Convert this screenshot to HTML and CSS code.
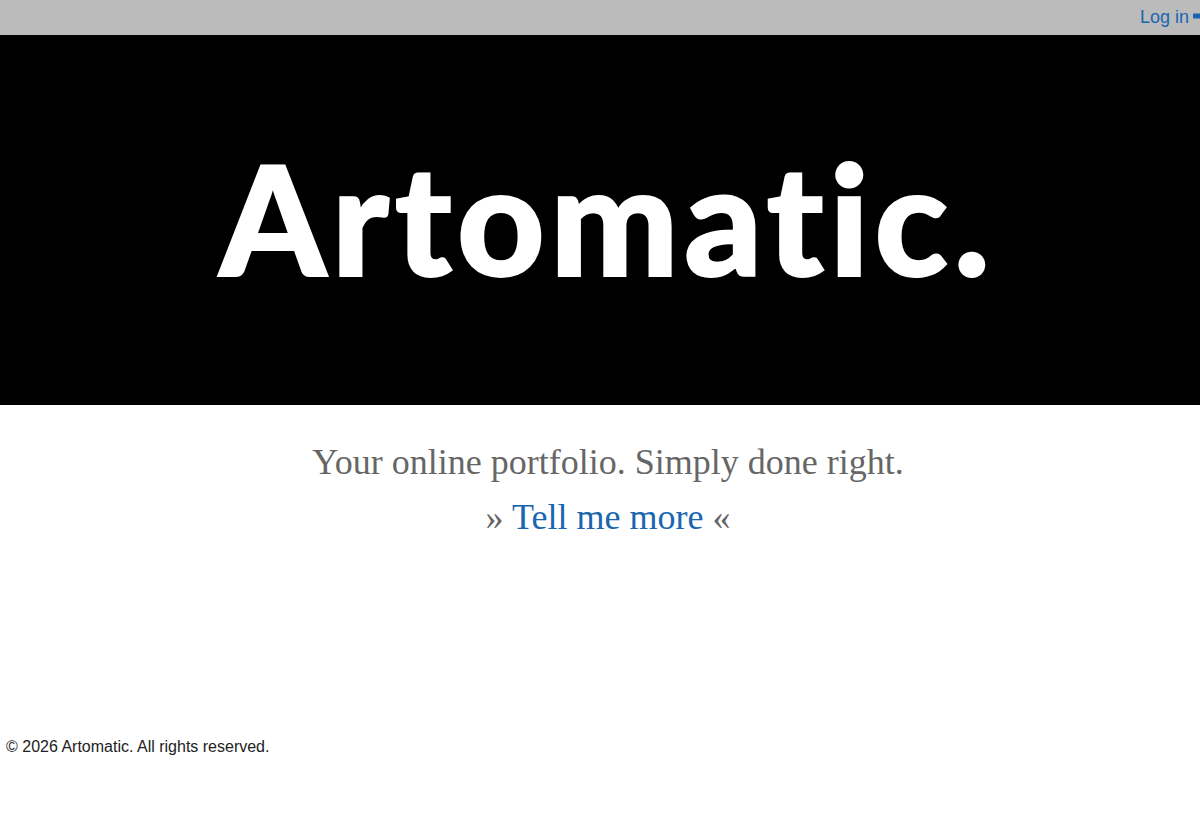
FILE: index.html
```html
<!DOCTYPE html>
<html lang="en">
<head>
    <meta charset="UTF-8">
    <meta name="viewport" content="width=device-width, initial-scale=1.0">
    <title>Artomatic</title>
    <link rel="stylesheet" href="styles.css">
</head>
<body>
    <div class="top-bar">
        <a class="login-link" href="#">Log in
            <svg class="login-icon" viewBox="0 0 16 16" width="16" height="16"><path d="M0 5.500h7V2l6 6-6 6V10.500H0z" fill="#1a62b0"/></svg>
        </a>
    </div>

    <div class="hero">
        <h1 class="logo">Artomatic.</h1>
    </div>

    <div class="intro">
        <p>Your online portfolio. Simply done right.</p>
        <p>» <a href="#">Tell me more</a> «</p>
    </div>

    <div class="footer">© 2026 Artomatic. All rights reserved.</div>
</body>
</html>
```

FILE: styles.css
```css
html, body {
    overflow: hidden;
}

body {
    margin: 0;
    height: 820px;
    background: white;
    color: #222;
    font-family: "Liberation Sans", Arial, sans-serif;
}

a {
    color: #1a66b0;
    text-decoration: none;
}

.top-bar {
    height: 35px;
    padding-left: 1140px;
    background: #bbbbbb;
    overflow: hidden;
}

.login-link {
    display: flex;
    align-items: center;
    gap: 4px;
    width: 80px;
    height: 35px;
    font-size: 18px;
    white-space: nowrap;
}

.login-icon {
    margin-bottom: 3px;
}

.hero {
    display: flex;
    align-items: center;
    justify-content: center;
    height: 370px;
    background: black;
}

.logo {
    margin: 0;
    padding: 0 0 7px 15px;
    color: white;
    font-family: Lato, sans-serif;
    font-size: 152px;
    font-weight: 900;
    letter-spacing: 5.6px;
    line-height: 1;
    -webkit-text-stroke: 2px white;
}

.intro {
    padding: 30px 0 0 16px;
    text-align: center;
    color: #666;
    font-family: "Liberation Serif", "Times New Roman", serif;
    font-size: 36px;
}

.intro p {
    margin: 0;
    line-height: 55px;
}

.footer {
    margin-top: 193px;
    padding-left: 6px;
    font-size: 16px;
    line-height: 18px;
}
```
